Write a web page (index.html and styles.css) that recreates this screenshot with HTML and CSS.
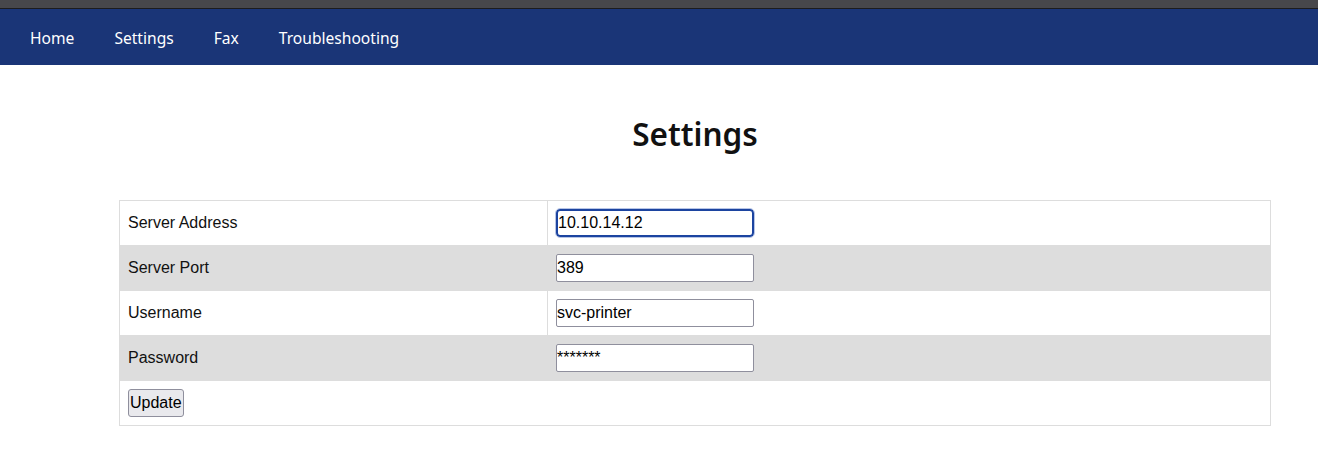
FILE: index.html
```html
<!DOCTYPE html>
<html lang="en">
<head>
    <meta charset="UTF-8">
    <meta name="viewport" content="width=device-width, initial-scale=1.0">
    <title>Settings</title>
    <link rel="stylesheet" href="styles.css">
</head>
<body>
    <div class="topstrip"></div>
    <ul class="nav">
        <li><a href="#">Home</a></li>
        <li><a href="#">Settings</a></li>
        <li><a href="#">Fax</a></li>
        <li><a href="#">Troubleshooting</a></li>
    </ul>

    <div class="content">
        <h1>Settings</h1>
        <form>
            <table class="settings">
                <tr>
                    <td class="label">Server Address</td>
                    <td><input type="text" class="field focused" value="10.10.14.12"></td>
                </tr>
                <tr>
                    <td class="label">Server Port</td>
                    <td><input type="text" class="field" value="389"></td>
                </tr>
                <tr>
                    <td class="label">Username</td>
                    <td><input type="text" class="field" value="svc-printer"></td>
                </tr>
                <tr>
                    <td class="label">Password</td>
                    <td><input type="text" class="field" value="*******"></td>
                </tr>
                <tr>
                    <td colspan="2"><button type="button" class="btn">Update</button></td>
                </tr>
            </table>
        </form>
    </div>
</body>
</html>
```

FILE: styles.css
```css
*{
    padding: 0;
    margin: 0;
    box-sizing: border-box;
}
body{
    background-color: #fff;
    font-family: "Liberation Sans", Arial, sans-serif;
}
.topstrip{
    height: 9px;
    background-color: #47474b;
    border-bottom: 1px solid #1c1c1e;
}
.nav{
    list-style: none;
    display: flex;
    height: 56px;
    align-items: center;
    padding-left: 10px;
    background-color: #1a3577;
}
.nav li a{
    display: block;
    padding: 0 20px;
    color: #fff;
    text-decoration: none;
    font-family: "Noto Sans", sans-serif;
    font-size: 15.6px;
    position: relative;
    top: 1px;
}
.content{
    width: 1152px;
    margin-left: 119px;
}
.content h1{
    text-align: center;
    font-family: "Noto Sans", sans-serif;
    font-weight: 600;
    font-size: 31.5px;
    color: #111;
    margin-top: 47px;
    margin-bottom: 45px;
}
.settings{
    width: 100%;
    border-collapse: collapse;
    border: 1px solid #ddd;
}
.settings td{
    border: 1px solid #ddd;
    padding: 8px;
    font-size: 16px;
    color: #111;
    height: 45px;
}
.settings tr:nth-child(even) td{
    background-color: #ddd;
}
.settings td.label{
    width: 428px;
}
.field{
    width: 198px;
    height: 28px;
    border: 1px solid #8f8f9d;
    border-radius: 2px;
    padding: 1px 0;
    font-family: "Liberation Sans", Arial, sans-serif;
    font-size: 16px;
    color: #000;
    background-color: #fff;
    display: block;
}
.field.focused{
    border: 2px solid #1c44a0;
    border-radius: 4px;
    outline: 1px solid #b7c5e6;
    padding: 0;
}
.btn{
    height: 28px;
    padding: 0 1px;
    font-family: "Liberation Sans", Arial, sans-serif;
    font-size: 16px;
    color: #000;
    background-color: #e9e9ed;
    border: 1px solid #8f8f9d;
    border-radius: 3px;
    display: block;
}
```
